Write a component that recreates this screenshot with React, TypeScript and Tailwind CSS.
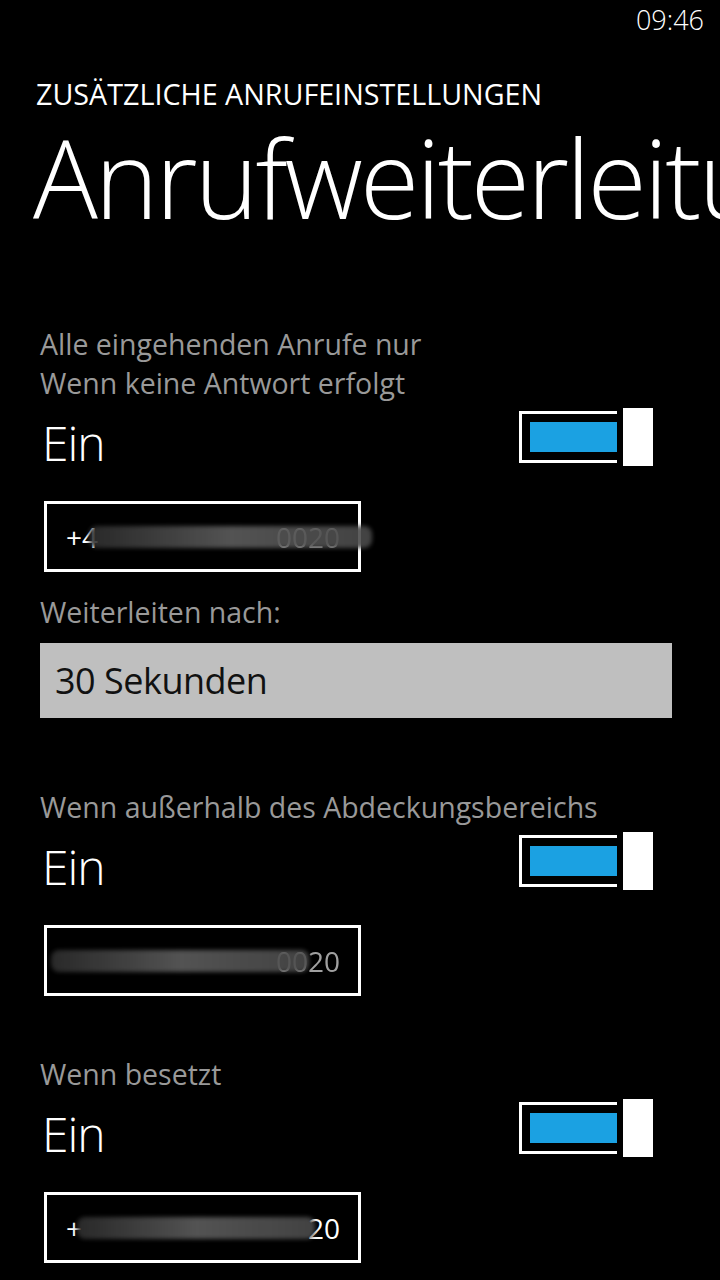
import React from "react";

const Toggle = () => (
    <div className="flex items-center gap-[6px]">
        <div className="flex h-[52px] w-[98px] items-center border-[3px] border-r-0 border-white pl-[8px]">
            <div className="h-[30px] flex-1 bg-[#1ba1e2]" />
        </div>
        <div className="h-[58px] w-[30px] bg-white" />
    </div>
);

interface NumberBoxProps {
    lead: string;
    tail: string;
    smearFrom: number;
    smearTo: number;
    crispTail?: boolean;
}

// the phone numbers are smudged out in the screenshot
const NumberBox = ({ lead, tail, smearFrom, smearTo, crispTail }: NumberBoxProps) => (
    <div className="relative ml-[4px] flex h-[71px] w-[317px] items-center border-[3px] border-white pl-[19px] pr-[18px]">
        <span className="text-[28px] leading-none text-white">{lead}</span>
        <span
            className={
                crispTail
                    ? "ml-auto text-[28px] leading-none text-white"
                    : "ml-auto text-[28px] leading-none text-[#a0a0a0] blur-[0.6px]"
            }>
            {tail}
        </span>
        <div
            className="absolute top-[22px] h-[22px] rounded-[8px] bg-gradient-to-r from-[#2e2e2e] via-[#5c5c5c] to-[#4a4a4a] blur-[2px] opacity-90"
            style={{ left: smearFrom, width: smearTo - smearFrom }}
        />
    </div>
);

interface SectionProps {
    label: string[];
    lead: string;
    tail: string;
    smearFrom: number;
    smearTo: number;
    crispTail?: boolean;
    children?: React.ReactNode;
}

const Section = ({ label, lead, tail, smearFrom, smearTo, crispTail, children }: SectionProps) => (
    <div className="flex flex-col">
        <div className="text-[28.5px] leading-[39px] text-[#999999]">
            {label.map(l => (
                <div key={l}>{l}</div>
            ))}
        </div>
        <div className="mt-[5px] flex items-start justify-between pr-[67px]">
            <span className="mt-[11px] pl-[2px] text-[48px] font-light leading-none tracking-[-1px] text-white">Ein</span>
            <Toggle />
        </div>
        <div className="mt-[34px]">
            <NumberBox lead={lead} tail={tail} smearFrom={smearFrom} smearTo={smearTo} crispTail={crispTail} />
        </div>
        {children}
    </div>
);

export default function App() {
    return (
        <div className="h-[1280px] w-[720px] overflow-hidden bg-black font-['Segoe_UI','Open_Sans',sans-serif] text-white">
            <div className="flex h-[50px] justify-end pr-[16px] pt-[6px]">
                <span className="text-[27px] font-light leading-none">09:46</span>
            </div>
            <div className="mt-[26px] pl-[36px] text-[28.7px] leading-[36px] whitespace-nowrap">
                ZUSÄTZLICHE ANRUFEINSTELLUNGEN
            </div>
            <div className="mt-[12px] overflow-hidden pl-[33px] text-[108px] font-light leading-none tracking-[-3px] whitespace-nowrap">
                Anrufweiterleitung
            </div>
            <div className="mt-[93px] pl-[40px]">
                <Section
                    label={["Alle eingehenden Anrufe nur", "Wenn keine Antwort erfolgt"]}
                    lead="+4"
                    tail="0020"
                    smearFrom={42}
                    smearTo={325}>
                    <div className="mt-[21px] text-[28.5px] leading-[39px] text-[#999999]">Weiterleiten nach:</div>
                    <div className="mt-[11px] flex h-[75px] w-[632px] items-center bg-[#bfbfbf] pl-[15px]">
                        <span className="text-[36px] leading-none tracking-[-0.5px] text-[#111111]">30 Sekunden</span>
                    </div>
                </Section>
                <div className="mt-[70px]">
                    <Section
                        label={["Wenn außerhalb des Abdeckungsbereichs"]}
                        lead=""
                        tail="0020"
                        smearFrom={4}
                        smearTo={262}
                    />
                </div>
                <div className="mt-[59px]">
                    <Section
                        label={["Wenn besetzt"]}
                        lead="+"
                        tail="20"
                        smearFrom={30}
                        smearTo={268}
                        crispTail
                    />
                </div>
            </div>
        </div>
    );
}
